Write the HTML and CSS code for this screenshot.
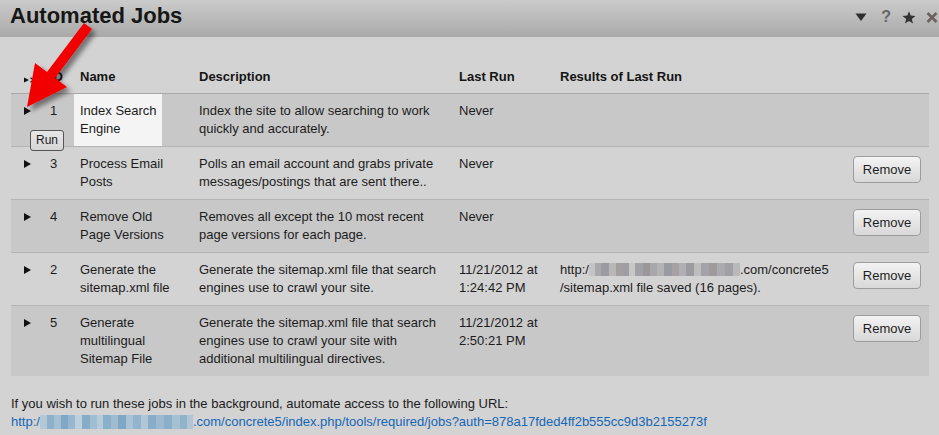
FILE: index.html
```html
<!DOCTYPE html>
<html>
<head>
<meta charset="utf-8">
<link rel="stylesheet" href="styles.css">
</head>
<body>
<div class="titlebar">
  <h1 class="title">Automated Jobs</h1>
  <div class="tools">
    <svg class="ico" width="12" height="10" viewBox="0 0 12 10"><polygon points="0.5,1.5 11.5,1.5 6,9" fill="#2e2e2e"/></svg>
    <span class="help">?</span>
    <svg class="ico" width="14" height="13" viewBox="0 0 14 13"><polygon points="7,0.3 8.7,4.6 13.5,4.9 9.8,7.9 11,12.6 7,10 3,12.6 4.2,7.9 0.5,4.9 5.3,4.6" fill="#333"/></svg>
    <svg class="ico" width="12" height="11" viewBox="0 0 12 11"><path d="M1.5 1 L10.5 10 M10.5 1 L1.5 10" stroke="#6e5f5f" stroke-width="2.6"/></svg>
  </div>
</div>

<div class="content">
  <table class="jobs">
    <colgroup>
      <col class="w-run"><col class="w-id"><col class="w-name"><col class="w-desc"><col class="w-last"><col class="w-res"><col class="w-btn">
    </colgroup>
    <thead>
      <tr>
        <th class="c-run"><svg width="12" height="6" viewBox="0 0 12 6"><polygon points="0,0.5 5,3 0,5.5" fill="#111"/><path d="M6.5 0.8 L9.5 3 L6.5 5.2" stroke="#111" stroke-width="1.2" fill="none"/></svg></th>
        <th class="c-id">ID</th>
        <th>Name</th>
        <th>Description</th>
        <th>Last Run</th>
        <th>Results of Last Run</th>
        <th></th>
      </tr>
    </thead>
    <tbody>
      <tr class="odd">
        <td class="c-run"><span class="play"></span></td>
        <td class="c-id">1</td>
        <td class="c-name"><div class="nm hl">Index Search<br>Engine</div></td>
        <td>Index the site to allow searching to work quickly and accurately.</td>
        <td>Never</td>
        <td></td>
        <td class="c-btn"></td>
      </tr>
      <tr>
        <td class="c-run"><span class="play"></span></td>
        <td class="c-id">3</td>
        <td class="c-name"><div class="nm">Process Email Posts</div></td>
        <td>Polls an email account and grabs private messages/postings that are sent there..</td>
        <td>Never</td>
        <td></td>
        <td class="c-btn"><button class="btn">Remove</button></td>
      </tr>
      <tr class="odd">
        <td class="c-run"><span class="play"></span></td>
        <td class="c-id">4</td>
        <td class="c-name"><div class="nm">Remove Old Page Versions</div></td>
        <td>Removes all except the 10 most recent page versions for each page.</td>
        <td>Never</td>
        <td></td>
        <td class="c-btn"><button class="btn">Remove</button></td>
      </tr>
      <tr>
        <td class="c-run"><span class="play"></span></td>
        <td class="c-id">2</td>
        <td class="c-name"><div class="nm">Generate the sitemap.xml file</div></td>
        <td>Generate the sitemap.xml file that search engines use to crawl your site.</td>
        <td>11/21/2012 at 1:24:42 PM</td>
        <td>http:/<span class="blur-gray"></span>.com/concrete5<br>/sitemap.xml file saved (16 pages).</td>
        <td class="c-btn"><button class="btn">Remove</button></td>
      </tr>
      <tr class="odd">
        <td class="c-run"><span class="play"></span></td>
        <td class="c-id">5</td>
        <td class="c-name"><div class="nm">Generate multilingual Sitemap File</div></td>
        <td>Generate the sitemap.xml file that search engines use to crawl your site with additional multilingual directives.</td>
        <td>11/21/2012 at 2:50:21 PM</td>
        <td></td>
        <td class="c-btn"><button class="btn">Remove</button></td>
      </tr>
    </tbody>
  </table>

  <p class="note">If you wish to run these jobs in the background, automate access to the following URL:<br>
  <a class="url" href="#">http:/<span class="blur-blue"></span>.com/concrete5/index.php/tools/required/jobs?auth=878a17fded4ff2b555cc9d3b2155273f</a></p>
</div>

<svg class="pointer" width="110" height="120" viewBox="0 0 110 120">
  <defs>
    <filter id="sh" x="-30%" y="-30%" width="160%" height="160%">
      <feDropShadow dx="4" dy="4" stdDeviation="2.5" flood-color="#000" flood-opacity="0.45"/>
    </filter>
  </defs>
  <polygon points="84,23 92,29 55,78 67,87 27,107 35,63 47,72" fill="#f20000" filter="url(#sh)"/>
</svg>
<div class="tip">Run</div>
</body>
</html>
```

FILE: styles.css
```css
html, body {
  margin: 0;
  padding: 0;
  background: #d3d3d3;
  font-family: "Liberation Sans", Arial, sans-serif;
  color: #1c1c1c;
}

.titlebar {
  height: 37px;
  background: linear-gradient(#cbcbcb, #a9a9a9);
  display: flex;
  align-items: flex-start;
  justify-content: space-between;
}

.title {
  margin: 0;
  padding-left: 10px;
  font-size: 22px;
  line-height: 31px;
  font-weight: bold;
  color: #161616;
}

.tools {
  display: flex;
  align-items: center;
  padding-top: 10px;
  margin-right: 1px;
}

.ico {
  display: block;
}

.tools .ico:first-child { margin-right: 14px; }
.tools .ico:nth-child(3) { margin-right: 10px; }

.help {
  font-size: 16px;
  font-weight: bold;
  color: #666;
  line-height: 14px;
  margin-right: 11px;
}

.content {
  padding: 24px 10px 0 11px;
}

.jobs {
  width: 918px;
  border-collapse: collapse;
  table-layout: fixed;
  font-size: 13px;
  line-height: 18px;
}

.w-run { width: 29px; }
.w-id { width: 34px; }
.w-name { width: 119px; }
.w-desc { width: 260px; }
.w-last { width: 101px; }
.w-res { width: 290px; }
.w-btn { width: 85px; }

.jobs th {
  text-align: left;
  font-weight: bold;
  padding: 7px 6px 7px 6px;
  border-bottom: 1px solid #a9a9a9;
  color: #151515;
}

.jobs td {
  vertical-align: top;
  padding: 8px 8px 8px 6px;
}

.jobs tbody tr + tr td {
  border-top: 1px solid #b3b3b3;
}

.jobs tr.odd td {
  background: #c8c8c8;
}

.jobs .c-run {
  padding-left: 13px;
  padding-right: 0;
}

.jobs th.c-run svg {
  display: block;
  margin-top: 6px;
}

.jobs .c-id {
  padding-left: 10px;
  padding-right: 0;
}

.play {
  display: block;
  width: 0;
  height: 0;
  margin-top: 5px;
  border-top: 4px solid transparent;
  border-bottom: 4px solid transparent;
  border-left: 7px solid #111;
}

.jobs td.c-name {
  padding-left: 0;
  padding-right: 13px;
}

.nm {
  padding-left: 6px;
  max-width: 100px;
}

.nm.hl {
  width: max-content;
  max-width: none;
  background: #f4f4f4;
  padding: 8px 5px 8px 6px;
  margin: -8px 0;
}

.jobs td.c-btn {
  text-align: right;
  padding-right: 8px;
}

.btn {
  font-family: "Liberation Sans", Arial, sans-serif;
  font-size: 13px;
  color: #1e1e1e;
  width: 68px;
  height: 27px;
  margin-top: 1px;
  padding: 0;
  border: 1px solid #9c9c9c;
  border-radius: 4px;
  background: linear-gradient(#f3f3f3, #d8d8d8);
}

.blur-gray {
  display: inline-block;
  width: 151px;
  height: 13px;
  vertical-align: -2px;
  background:
    linear-gradient(90deg,
      #c4c4c4 0 6px, #a9a9ad 6px 12px, #9b9ba1 12px 20px, #b7b7b7 20px 27px,
      #a39ea0 27px 34px, #9d9da3 34px 40px, #c7c7c7 40px 46px, #a1a1a6 46px 54px,
      #9c989a 54px 61px, #a7a7ac 61px 68px, #b3b3b3 68px 75px, #9a9aa1 75px 83px,
      #a6a1a3 83px 90px, #b0b0b4 90px 97px, #9b9ba0 97px 105px, #bdbdbd 105px 112px,
      #a2a2a8 112px 120px, #9f9a9c 120px 128px, #aaaaaf 128px 136px, #a0a0a5 136px 144px,
      #b9b9bb 144px 151px);
}

.note {
  margin: 19px 0 0 0;
  font-size: 13px;
  line-height: 18px;
  color: #1c1c1c;
}

.url {
  color: #1566b6;
  text-decoration: none;
}

.blur-blue {
  display: inline-block;
  width: 153px;
  height: 14px;
  vertical-align: -3px;
  background:
    linear-gradient(90deg,
      #b3c7d6 0 7px, #8eb1cb 7px 14px, #a4bfd3 14px 21px, #7fa8c6 21px 28px,
      #98b7ce 28px 35px, #bccfdc 35px 42px, #86acc8 42px 50px, #a1bdd1 50px 57px,
      #b6cad9 57px 63px, #8aafc9 63px 71px, #9ebbd0 71px 78px, #7fa6c4 78px 86px,
      #a9c2d5 86px 93px, #92b4cc 93px 101px, #b1c7d7 101px 108px, #87adc8 108px 116px,
      #9cb9cf 116px 124px, #8bafc9 124px 132px, #a6c0d3 132px 140px, #92b3cb 140px 147px,
      #b0c6d6 147px 153px);
}

.pointer {
  position: absolute;
  left: 0;
  top: 0;
}

.tip {
  position: absolute;
  left: 30px;
  top: 130px;
  width: 34px;
  height: 21px;
  box-sizing: border-box;
  border: 1px solid #555;
  border-radius: 3px;
  background: linear-gradient(#e6e6e6, #d6d6d6);
  font-size: 12px;
  line-height: 19px;
  text-align: center;
  color: #1c1c1c;
}
```
